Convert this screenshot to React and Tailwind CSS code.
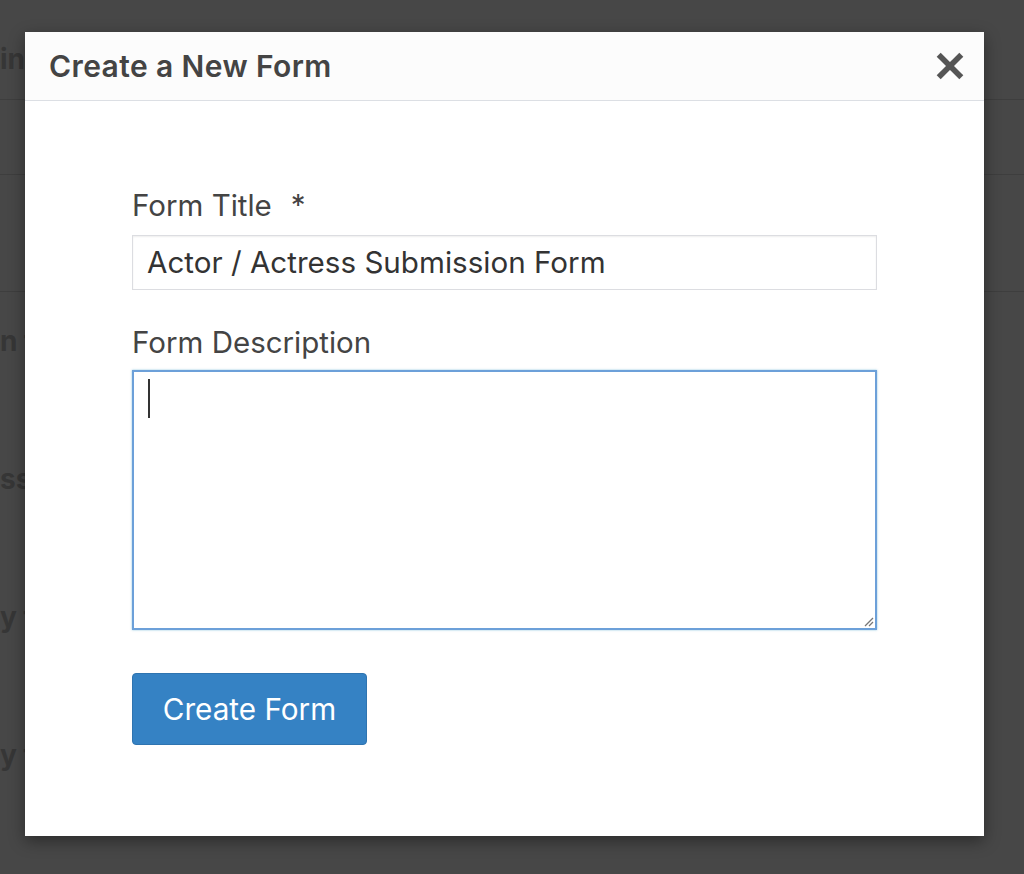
import React from 'react'

const font = { fontFamily: 'Inter, "Noto Sans", "Liberation Sans", sans-serif' }

const CloseIcon = () => (
  <svg width="28" height="28" viewBox="0 0 28 28">
    <g fill="#555" transform="rotate(45 14 14)">
      <rect x="11.2" y="-2" width="5.6" height="32" />
      <rect x="-2" y="11.2" width="32" height="5.6" />
    </g>
  </svg>
)

const ResizeHandle = () => (
  <svg width="12" height="12" viewBox="0 0 12 12">
    <path d="M11 3 L3 11 M11 7 L7 11" stroke="#777" strokeWidth="1.3" fill="none" />
  </svg>
)

// page behind the overlay, mostly hidden by the modal
const Backdrop = () => (
  <div className="flex flex-col w-full h-full text-[#363636] font-bold text-[28px]" style={font}>
    <div className="h-[100px] border-b border-[#3e3e3e] flex items-center pt-[18px]">
      <span>in</span>
    </div>
    <div className="h-[75px] border-b border-[#3e3e3e]" />
    <div className="h-[117px] border-b border-[#3e3e3e]" />
    <div className="pt-[28px] flex flex-col gap-[96px] leading-[42px]">
      <span>n t</span>
      <span>ss</span>
      <span>y t</span>
      <span>y t</span>
    </div>
  </div>
)

export default function App() {
  return (
    <div className="relative w-full h-[874px] bg-[#474747] overflow-hidden">
      <Backdrop />

      {/* Modal */}
      <div
        className="absolute left-[25px] top-[32px] w-[959px] h-[804px] bg-white flex flex-col shadow-[0_5px_15px_rgba(0,0,0,0.4)]"
        style={font}
      >
        {/* Header */}
        <div className="h-[69px] shrink-0 bg-[#fcfcfc] border-b border-[#dcdfe4] flex items-center justify-between pl-[24px] pr-[20px]">
          <h2 className="text-[30px] font-semibold text-[#444] tracking-[0.4px]">Create a New Form</h2>
          <button className="w-[28px] h-[28px] flex items-center justify-center">
            <CloseIcon />
          </button>
        </div>

        {/* Body */}
        <div className="flex flex-col pl-[107px] pr-[107px] pt-[86px]">
          <label className="text-[29.5px] leading-[36px] text-[#444] flex gap-[19px]">
            <span>Form Title</span>
            <span>*</span>
          </label>
          <div className="mt-[12px] h-[55px] w-[745px] border border-[#dcdde1] shadow-[inset_0_1px_2px_rgba(0,0,0,0.07)] flex items-center px-[14px]">
            <span className="text-[29.6px] text-[#333]">Actor / Actress Submission Form</span>
          </div>

          <label className="mt-[34px] text-[29.5px] leading-[36px] text-[#444]">Form Description</label>
          <div className="relative mt-[10px] h-[260px] w-[745px] border-2 border-[#6ca0d9] shadow-[0_0_2px_rgba(30,140,190,0.5)]">
            <div className="absolute left-[14px] top-[7px] w-[1.5px] h-[39px] bg-[#333]" />
            <div className="absolute right-[1px] bottom-[1px]">
              <ResizeHandle />
            </div>
          </div>

          <div className="mt-[43px]">
            <button className="w-[235px] h-[72px] rounded-[4px] bg-[#3582c4] border border-[#2f74b0] text-white text-[29.7px] flex items-center justify-center">
              Create Form
            </button>
          </div>
        </div>
      </div>
    </div>
  )
}
